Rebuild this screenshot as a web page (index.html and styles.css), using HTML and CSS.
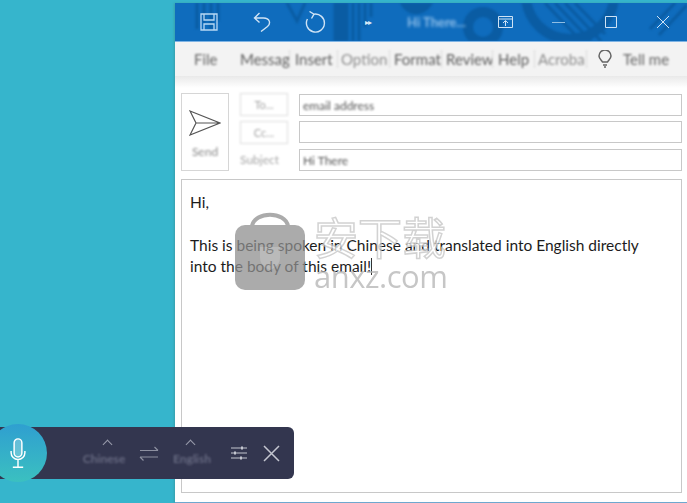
FILE: index.html
```html
<!DOCTYPE html>
<html lang="en">
<head>
    <meta charset="UTF-8">
    <meta name="viewport" content="width=device-width, initial-scale=1.0">
    <title>Hi There</title>
    <link rel="stylesheet" href="styles.css">
</head>
<body>
    <div class="window">
        <div class="titlebar">
            <svg class="deco" width="512" height="38" viewBox="0 0 512 38" fill="none">
                <g stroke="#0a5ca3" stroke-width="3">
                    <path d="M22 0v26M29 0v20M36 0v26M43 0v18"/>
                    <path d="M112 0l10 18 8-18"/>
                    <path d="M160 0v38M166 0v38M172 0v38M178 0v38M184 0v38M190 0v24M196 0v14"/>
                    <path d="M370 0l36 38M380 0l36 38M390 0l36 38M400 0l30 31"/>
                    <path d="M475 26l25-26M484 32l28-30"/>
                </g>
                <rect x="160" width="12" height="38" fill="#0a5ca3"/>
                <path d="M225 0c6 14 24 16 33 0z" fill="#0a5ca3"/>
                <circle cx="308" cy="24" r="15" stroke="#0a5ca3" stroke-width="10"/>
                <circle cx="395" cy="-8" r="44" stroke="#0a5ca3" stroke-width="10"/>
            </svg>
            <svg class="tb-icon icon-save" width="18" height="18" viewBox="0 0 18 18" fill="none" stroke="#b7d8f4" stroke-width="1.300">
                <path d="M1 1h16v16H1z"/>
                <path d="M4 1v6h10V1M4 17v-6h10v6"/>
            </svg>
            <svg class="tb-icon icon-undo" width="18" height="20" viewBox="0 0 18 20" fill="none" stroke="#cfe3f5" stroke-width="1.400">
                <path d="M6.500 1L1.500 6l5 4.500M1.500 6h9c6.500 0 7.500 5.500 4 8.500L8 19.500"/>
            </svg>
            <svg class="tb-icon icon-redo" width="22" height="22" viewBox="0 0 22 22" fill="none" stroke="#cfe3f5" stroke-width="1.400">
                <path d="M9 3.200A9 9 0 1 1 2.400 8M4.500 0.500L9 3.200 6.500 7.500"/>
            </svg>
            <span class="more">&#9656;&#9656;</span>
            <span class="doc-title">Hi There...</span>
            <svg class="tb-icon icon-ribbon" width="15" height="12" viewBox="0 0 15 12" fill="none" stroke="#cfe3f5">
                <path d="M.5.500h14v11H.5zM.5 3h14M7.500 10V5M5 7l2.500-2.500L10 7"/>
            </svg>
            <svg class="tb-icon icon-min" width="13" height="3" viewBox="0 0 13 3" stroke="#8fbde3"><path d="M0 1.500h13"/></svg>
            <svg class="tb-icon icon-max" width="12" height="12" viewBox="0 0 12 12" fill="none" stroke="#cfe3f5"><path d="M.5.500h11v11H.5z"/></svg>
            <svg class="tb-icon icon-close" width="12" height="12" viewBox="0 0 12 12" fill="none" stroke="#cfe3f5"><path d="M0 0l12 12M12 0L0 12"/></svg>
        </div>

        <div class="ribbon">
            <span class="tab tab-file">File</span>
            <span class="tab tab-message">Messag</span>
            <span class="tab tab-insert">Insert</span>
            <span class="tab tab-options">Option</span>
            <span class="tab tab-format">Format</span>
            <span class="tab tab-review">Review</span>
            <span class="tab tab-help">Help</span>
            <span class="tab tab-acrobat">Acroba</span>
            <svg class="bulb" width="14" height="18" viewBox="0 0 14 18" fill="none" stroke="#666" stroke-width="1.500">
                <path d="M4.500 12C3 10 1 8.500 1 6a6 6 0 0 1 12 0c0 2.500-2 4-3.500 6zM5 15h4M6 17h2"/>
            </svg>
            <span class="tab tab-tell">Tell me</span>
        </div>
        <div class="ribbon-shadow"></div>

        <div class="compose">
            <div class="send">
                <svg width="32" height="26" viewBox="0 0 32 26" fill="none" stroke="#555" stroke-width="1.200">
                    <path d="M1 1l30 12L1 25l6-12zM7 13h24"/>
                </svg>
                <span class="send-label">Send</span>
            </div>
            <div class="fields">
                <div class="field-row">
                    <span class="addr-btn">To...</span>
                    <div class="field-input"><span class="blur-text">email address</span></div>
                </div>
                <div class="field-row">
                    <span class="addr-btn">Cc...</span>
                    <div class="field-input"></div>
                </div>
                <div class="field-row">
                    <span class="subject-label">Subject</span>
                    <div class="field-input"><span class="blur-text">Hi There</span></div>
                </div>
            </div>
        </div>

        <div class="body-box">
            <p class="mail-line">Hi,</p>
            <p class="mail-line mail-gap">This is being spoken in Chinese and translated into English directly</p>
            <p class="mail-line">into the body of this email!<span class="caret"></span></p>
        </div>
    </div>

    <div class="watermark">
        <svg width="70" height="80" viewBox="0 0 70 80">
            <path d="M17 16C20 1 50 1 53 16" fill="none" stroke="#8f8f8f" stroke-width="4"/>
            <rect y="15" width="70" height="65" rx="10" fill="#8f8f8f"/>
            <path d="M25 37h20v11c0 6-5 10-10 12-5-2-10-6-10-12z" fill="#a3a3a3"/>
        </svg>
        <div class="wm-text">
            <span class="wm-cn">安下载</span>
            <span class="wm-en">anxz.com</span>
        </div>
    </div>

    <div class="voice-bar">
        <div class="mic">
            <svg width="18" height="31" viewBox="0 0 18 36" fill="none" stroke="#fff" stroke-width="1.700">
                <rect x="4.500" y="1" width="9" height="21" rx="4.500" fill="#fff" fill-opacity=".25"/>
                <path d="M1 15v2a8 8 0 0 0 16 0v-2M9 25v8M3 34h12"/>
            </svg>
        </div>
        <div class="lang lang-from">
            <span class="caret-up"></span>
            <span class="lang-name">Chinese</span>
        </div>
        <svg class="swap" width="20" height="15" viewBox="0 0 20 15" fill="none" stroke="#8d90a0" stroke-width="1.200">
            <path d="M1 4.500h18M15.500 1L19 4.500M19 11H1M4.500 14.500L1 11"/>
        </svg>
        <div class="lang lang-to">
            <span class="caret-up"></span>
            <span class="lang-name">English</span>
        </div>
        <svg class="sliders" width="18" height="14" viewBox="0 0 18 14" fill="none" stroke="#c4c6d0" stroke-width="1.100">
            <path d="M1 2h16M1 7h16M1 12h16"/>
            <path d="M12 .5v3M5 5.500v3M11 10.500v3" stroke-width="2"/>
        </svg>
        <svg class="bar-close" width="17" height="17" viewBox="0 0 17 17" fill="none" stroke="#c4c6d0" stroke-width="1.500">
            <path d="M1 1l15 15M16 1L1 16"/>
        </svg>
    </div>
</body>
</html>
```

FILE: styles.css
```css
html, body {
    height: 100%;
}
body {
    margin: 0;
    overflow: hidden;
    font-family: "Lato", "Open Sans", sans-serif;
    background: #36b5cc;
    padding: 3px 0 0 175px;
    box-sizing: border-box;
}
.window {
    height: 500px;
    background: #fff;
    display: flex;
    flex-direction: column;
    box-sizing: border-box;
    border-bottom: 1px solid #6ea8cf;
    box-shadow: -1px 0 2px #3a9fab;
}

/* title bar */
.titlebar {
    height: 38px;
    flex: none;
    background: #0f6cbd;
    display: flex;
    align-items: center;
    position: relative;
    overflow: hidden;
    border-bottom: 1px solid #7fb4e4;
    box-sizing: content-box;
}
.deco {
    position: absolute;
    left: 0;
    top: 0;
    filter: blur(1px);
}
.tb-icon {
    position: relative;
    flex: none;
}
.icon-save { margin-left: 25px; }
.icon-undo { margin-left: 35px; }
.icon-redo { margin-left: 34px; }
.more {
    position: relative;
    flex: none;
    width: 8px;
    margin-left: 38px;
    font-size: 8px;
    letter-spacing: -1px;
    color: #dcebf8;
}
.doc-title {
    position: relative;
    flex: none;
    margin-left: 34px;
    width: 91px;
    font-size: 13px;
    font-weight: bold;
    color: #8fbfea;
    filter: blur(1.4px);
}
.icon-min { margin-left: 39px; }
.icon-max { margin-left: 40px; }
.icon-close { margin-left: 40px; }

/* ribbon */
.ribbon {
    height: 34px;
    flex: none;
    background: #f3f3f3;
    display: flex;
    align-items: center;
    font-size: 15px;
    color: #5e5e5e;
}
.tab {
    flex: none;
    box-sizing: border-box;
    overflow: hidden;
    white-space: nowrap;
    filter: blur(1.2px);
    border-right: 1px solid #dcdcdc;
}
.tab-file { width: 65px; padding-left: 19px; border-right: 0; color: #666; }
.tab-message { width: 50px; }
.tab-insert { width: 48px; padding-left: 5px; }
.tab-options { width: 52px; padding-left: 3px; color: #8e8e8e; }
.tab-format { width: 52px; padding-left: 4px; }
.tab-review { width: 51px; padding-left: 4px; }
.tab-help { width: 42px; padding-left: 5px; }
.tab-acrobat { width: 52px; padding-left: 3px; color: #8e8e8e; }
.bulb { margin-left: 11px; flex: none; }
.tab-tell { margin-left: 11px; border-right: 0; color: #666; }
.ribbon-shadow {
    height: 12px;
    flex: none;
    background: linear-gradient(#e9e9e9, #fff);
}

/* compose header */
.compose {
    display: flex;
    flex: none;
    margin: 5px 5px 0 6px;
    gap: 11px;
}
.send {
    width: 48px;
    height: 78px;
    box-sizing: border-box;
    border: 1px solid #d6d6d6;
    display: flex;
    flex-direction: column;
    align-items: center;
    padding-top: 16px;
}
.send-label {
    margin-top: 8px;
    font-size: 12px;
    color: #8a8a8a;
    filter: blur(1.1px);
}
.fields {
    flex: 1;
    display: flex;
    flex-direction: column;
    gap: 4.5px;
}
.field-row {
    display: flex;
    align-items: center;
    height: 23px;
    gap: 11px;
}
.addr-btn, .subject-label {
    width: 48px;
    flex: none;
    font-size: 11px;
    color: #a5a5a5;
    text-align: center;
    filter: blur(1px);
}
.addr-btn {
    height: 23px;
    line-height: 21px;
    border: 1px solid #dedede;
    box-sizing: border-box;
}
.subject-label {
    text-align: left;
    font-size: 12px;
}
.field-input {
    flex: 1;
    height: 22px;
    box-sizing: border-box;
    border: 1px solid #c8c8c8;
    padding-left: 3px;
    line-height: 18px;
}
.blur-text {
    font-size: 12px;
    color: #555;
    display: inline-block;
    filter: blur(1px);
}

/* mail body */
.body-box {
    flex: 1;
    margin: 8px 5px 9px 6px;
    border: 1px solid #c8c8c8;
    padding: 12px 8px;
}
.mail-line {
    margin: 0;
    font-size: 15.5px;
    line-height: 21px;
    color: #1c1c1c;
}
.mail-gap {
    margin-top: 22px;
}
.caret {
    display: inline-block;
    width: 1px;
    height: 17px;
    background: #333;
    vertical-align: -3px;
}

/* watermark lies over the email */
.watermark {
    position: absolute;
    left: 235px;
    top: 210px;
    display: flex;
    gap: 9px;
    opacity: .75;
    pointer-events: none;
}
.wm-text {
    display: flex;
    flex-direction: column;
    color: #b4b4b4;
}
.wm-cn {
    font-family: "Noto Sans CJK SC", sans-serif;
    font-size: 44px;
    line-height: 52px;
    color: #fff;
    -webkit-text-stroke: 1.5px #c4c4c4;
}
.wm-en {
    font-family: "Open Sans", sans-serif;
    font-size: 31px;
    line-height: 28px;
    letter-spacing: -.5px;
}

/* floating voice bar */
.voice-bar {
    position: absolute;
    left: 0;
    top: 427px;
    width: 294px;
    height: 52px;
    border-radius: 0 6px 6px 0;
    background: #33364f;
    display: flex;
    align-items: center;
}
.mic {
    position: absolute;
    left: -11px;
    top: -3px;
    width: 58px;
    height: 58px;
    border-radius: 50%;
    background: linear-gradient(#2f9fd0, #3bc0c0);
    display: flex;
    align-items: center;
    justify-content: center;
}
.lang {
    display: flex;
    flex-direction: column;
    align-items: center;
    gap: 4px;
    flex: none;
}
.lang-from { margin-left: 83px; width: 42px; }
.lang-to { margin-left: 14px; width: 38px; }
.lang-from .caret-up { margin-left: 6px; }
.lang-to .caret-up { margin-right: 4px; }
.lang-name {
    font-size: 12px;
    line-height: 14px;
    font-weight: bold;
    color: #666980;
    filter: blur(1px);
}
.caret-up {
    width: 6px;
    height: 6px;
    border-left: 1px solid #9a9cac;
    border-top: 1px solid #9a9cac;
    transform: rotate(45deg);
}
.swap { margin-left: 14px; flex: none; }
.sliders { margin-left: 19px; flex: none; }
.bar-close { margin-left: 15px; flex: none; }
```
